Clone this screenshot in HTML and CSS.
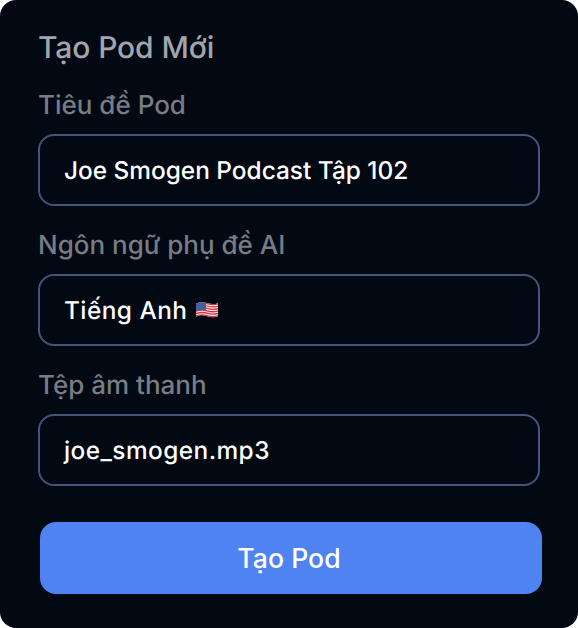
FILE: index.html
```html
<!DOCTYPE html>
<html lang="vi">
<head>
<meta charset="utf-8">
<title>Tạo Pod Mới</title>
<link rel="stylesheet" href="styles.css">
</head>
<body>
<main class="card">
  <h1 class="title">Tạo Pod Mới</h1>
  <div class="field">
    <label class="label">Tiêu đề Pod</label>
    <div class="input">Joe Smogen Podcast Tập 102</div>
  </div>
  <div class="field">
    <label class="label">Ngôn ngữ phụ đề AI</label>
    <div class="input input-wide">Tiếng Anh
      <svg class="flag" viewBox="0 0 24 18" aria-label="🇺🇸">
        <defs>
          <clipPath id="wave"><path d="M1 2.5C5 .8 8 .8 12 2s7 1.6 11 .2v13c-4 1.4-7 1.2-11 0s-7-1.2-11 .5z"/></clipPath>
        </defs>
        <g clip-path="url(#wave)">
          <rect width="24" height="18" fill="#f4eef0"/>
          <path d="M0 3.2C5 1.4 8 1.4 12 2.6s8 1.4 12 0M0 5.6C5 3.8 8 3.8 12 5s8 1.4 12 0M0 8C5 6.2 8 6.2 12 7.4s8 1.4 12 0M0 10.4c5-1.8 8-1.8 12-.6s8 1.4 12 0M0 12.8c5-1.8 8-1.8 12-.6s8 1.4 12 0M0 15.2c5-1.8 8-1.8 12-.6s8 1.4 12 0" fill="none" stroke="#d8323f" stroke-width="1.3"/>
          <path d="M0 0h11v9.4c-4-.8-7-.4-11 1.1z" fill="#44609f"/>
        </g>
      </svg>
    </div>
  </div>
  <div class="field">
    <label class="label">Tệp âm thanh</label>
    <div class="input input-wide">joe_smogen.mp3</div>
  </div>
  <button class="submit" type="button">Tạo Pod</button>
</main>
</body>
</html>
```
FILE: styles.css
```css
* { box-sizing: border-box; }
html, body { margin: 0; padding: 0; background: #fff; }
body { width: 578px; height: 628px; font-family: Inter, "Noto Sans", sans-serif; text-rendering: geometricPrecision; }
.card {
  width: 578px;
  height: 628px;
  background: #020913;
  border-radius: 16px;
  padding: 30px 38px 0;
  display: flex;
  flex-direction: column;
}
.title {
  margin: 0;
  font-size: 30px;
  line-height: 36px;
  font-weight: 540;
  color: #a1a5ad;
  letter-spacing: -0.1px;
}
.field { display: flex; flex-direction: column; margin-top: 23px; }
.label {
  font-size: 26px;
  line-height: 34px;
  font-weight: 540;
  color: #787c85;
  margin-bottom: 11px;
}
.input {
  width: 502px;
  height: 72px;
  border: 2px solid #435679;
  border-radius: 16px;
  padding: 0 24px;
  display: flex;
  align-items: center;
  gap: 8px;
  font-size: 24.4px;
  font-weight: 540;
  color: #fff;
}
.input-wide { letter-spacing: 0.45px; }
.flag { width: 24px; height: 18px; flex: none; margin-top: -1px; }
.submit {
  width: 502px;
  height: 72px;
  margin: 36px 0 0 2px;
  border: 0;
  border-radius: 16px;
  background: #4f83f1;
  color: #fff;
  font: 540 26.67px Inter, "Noto Sans", sans-serif;
  padding: 0 4px 0 0;
}
```
